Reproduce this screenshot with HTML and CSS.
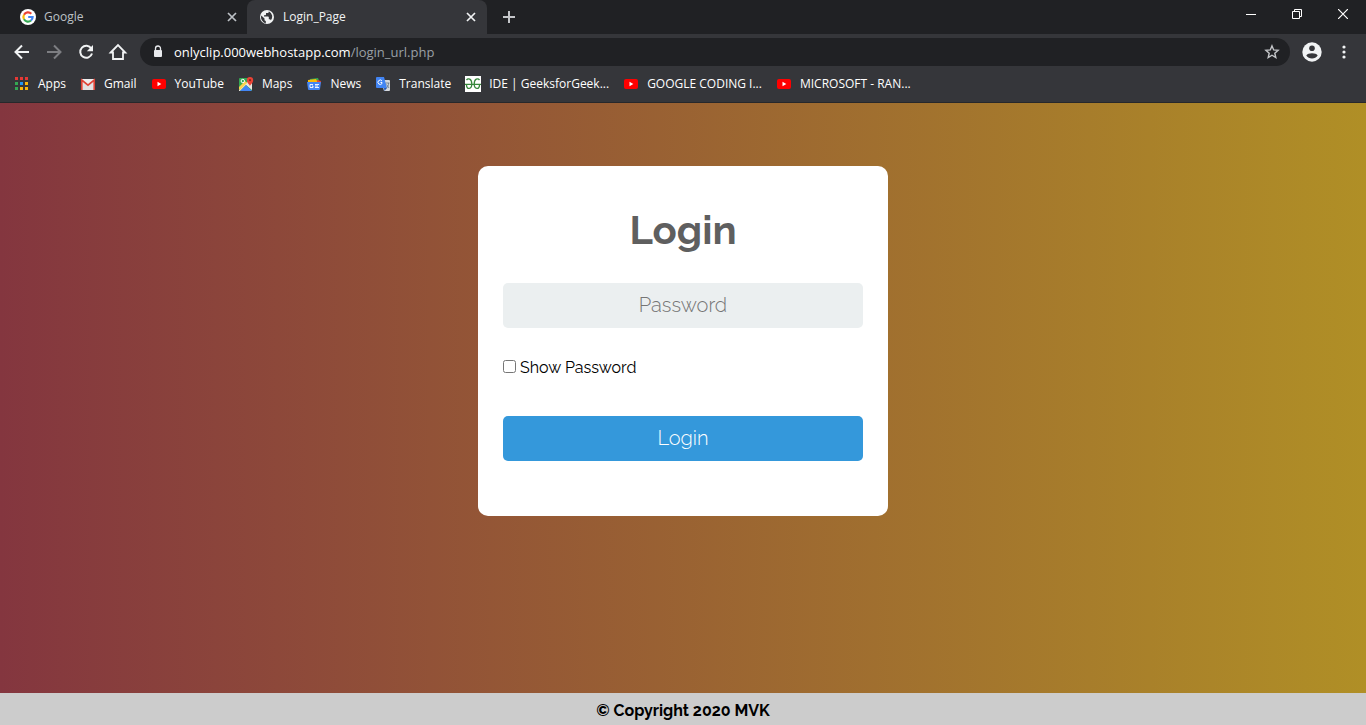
FILE: index.html
```
<!DOCTYPE html>
<html lang="en">
<head>
<meta charset="utf-8">
<title>Login_Page</title>
<link rel="stylesheet" href="styles.css">
</head>
<body>
<svg class="defs" aria-hidden="true">
  <symbol id="close" viewBox="0 0 16 16"><path d="M4 4l8 8M12 4l-8 8" stroke="currentColor" stroke-width="1.7" fill="none"/></symbol>
  <symbol id="youtube" viewBox="0 0 16 16"><rect x="1" y="3" width="14" height="10" rx="2" fill="#f00"/><path d="M6.500 5.800v4.400L10.300 8z" fill="#fff"/></symbol>
</svg>
<header class="browser">
  <div class="tabstrip">
    <div class="tab">
      <svg class="icon" viewBox="0 0 16 16"><circle cx="8" cy="8" r="8" fill="#fff"/><g fill="none" stroke-width="2.2"><path d="M11.3 4.7A4.6 4.6 0 0 0 4 5.8" stroke="#ea4335"/><path d="M4 5.8a4.6 4.6 0 0 0 0 4.5" stroke="#fbbc05"/><path d="M4 10.3a4.6 4.6 0 0 0 7 1.2" stroke="#34a853"/><path d="M11 11.5A4.5 4.5 0 0 0 12.6 8H8.2" stroke="#4285f4"/></g></svg>
      <span class="tab-title">Google</span>
      <button class="tab-close" aria-label="Close Google tab"><svg class="icon"><use href="#close"/></svg></button>
    </div>
    <div class="tab tab-active">
      <svg class="icon" viewBox="0 0 16 16"><circle cx="8" cy="8" r="7" fill="#f1f3f4"/><path d="M2.3 6.4l3.2 3.2v1.2c0 .7.5 1.2 1.3 1.2v2.4A6.3 6.3 0 0 1 2.3 6.4zM9.8 2.2v.5c0 .8-.6 1.4-1.4 1.4H7v1.4c0 .4-.3.7-.8.7H5v1.4h4c.5 0 .8.3.8.7v2h.7c.7 0 1.2.4 1.4 1a6 6 0 0 0-2.1-9.1z" fill="#35363a"/></svg>
      <span class="tab-title">Login_Page</span>
      <button class="tab-close" aria-label="Close Login_Page tab"><svg class="icon"><use href="#close"/></svg></button>
    </div>
    <button class="new-tab" aria-label="New tab"><svg class="icon" viewBox="0 0 16 16"><path d="M8 2v12M2 8h12" stroke="#c4c6c9" stroke-width="2"/></svg></button>
    <div class="window-buttons">
      <button aria-label="Minimize"><svg viewBox="0 0 10 10"><path d="M0 5.5h10" stroke="#fff"/></svg></button>
      <button aria-label="Restore"><svg viewBox="0 0 10 10"><path d="M.5 2.5h7v7h-7zM2.5 2.500V.5h7v7h-2" fill="none" stroke="#fff"/></svg></button>
      <button aria-label="Close window"><svg viewBox="0 0 10 10"><path d="M0 0l10 10M10 0L0 10" stroke="#fff" stroke-width="1.2"/></svg></button>
    </div>
  </div>
  <div class="toolbar">
    <button class="tool" aria-label="Back"><svg viewBox="0 0 20 20"><path d="M17 10H4M10 3.500L3.500 10l6.500 6.500" fill="none" stroke="#f1f3f4" stroke-width="2"/></svg></button>
    <button class="tool" aria-label="Forward"><svg viewBox="0 0 20 20"><path d="M3 10h13M10 3.500l6.500 6.500-6.500 6.500" fill="none" stroke="#7d7e82" stroke-width="2"/></svg></button>
    <button class="tool" aria-label="Reload"><svg viewBox="0 0 20 20"><path d="M15.300 6.500A6 6 0 1 0 16 11.500" fill="none" stroke="#f1f3f4" stroke-width="2"/><path d="M17 3v6.200h-6.200z" fill="#f1f3f4"/></svg></button>
    <button class="tool" aria-label="Home"><svg viewBox="0 0 20 20"><path d="M2.700 10.500L10 3l7.300 7.500H15V17H5v-6.500z" fill="none" stroke="#f1f3f4" stroke-width="1.8"/></svg></button>
    <div class="address">
      <svg class="icon" viewBox="0 0 16 16"><path d="M5.500 7V4.500a2.500 2.500 0 0 1 5 0V7" fill="none" stroke="#e8eaed" stroke-width="1.3"/><rect x="4" y="6" width="8" height="7" rx="1" fill="#e8eaed"/></svg>
      <span class="url">onlyclip.000webhostapp.com<span class="url-path">/login_url.php</span></span>
      <button class="star" aria-label="Bookmark this page"><svg class="icon" viewBox="0 0 16 16"><path d="M8 1.900l1.700 4 4.400.4-3.300 2.900 1 4.300L8 11.200l-3.800 2.300 1-4.300-3.300-2.900 4.400-.4z" fill="none" stroke="#c4c6c9" stroke-width="1.4"/></svg></button>
    </div>
    <button class="tool" aria-label="Profile"><svg viewBox="0 0 20 20"><circle cx="10" cy="10" r="9.700" fill="#f1f3f4"/><circle cx="10" cy="6.300" r="2.800" fill="#35363a"/><path d="M4.300 13.500c1.400-3 10-3 11.400 0-2.300 4-9.100 4-11.400 0z" fill="#35363a"/></svg></button>
    <button class="tool" aria-label="Menu"><svg viewBox="0 0 20 20" fill="#f1f3f4"><circle cx="10" cy="5" r="1.600"/><circle cx="10" cy="10" r="1.600"/><circle cx="10" cy="15" r="1.600"/></svg></button>
  </div>
  <nav class="bookmarks">
    <a href="#"><svg class="icon" viewBox="0 0 16 16"><g fill="#e53935"><path d="M1 1h3v3H1zM6 1h3v3H6zM11 1h3v3h-3z"/></g><path d="M1 6h3v3H1zM1 11h3v3H1z" fill="#34a853"/><path d="M6 6h3v3H6z" fill="#2196f3"/><path d="M11 6h3v3h-3zM6 11h3v3H6zM11 11h3v3h-3z" fill="#fbb60a"/></svg><span>Apps</span></a>
    <a href="#"><svg class="icon" viewBox="0 0 16 16"><rect x="1" y="3" width="14" height="11" rx="1" fill="#eee"/><path d="M3 14V6l5 4 5-4v8z" fill="#e2e2e2"/><path d="M1.800 14V4L8 9.200 14.200 4v10" fill="none" stroke="#df4437" stroke-width="1.700"/></svg><span>Gmail</span></a>
    <a href="#"><svg class="icon"><use href="#youtube"/></svg><span>YouTube</span></a>
    <a href="#"><svg class="icon" viewBox="0 0 16 16"><rect x="1" y="2" width="13" height="13" rx="1" fill="#34a853"/><path d="M1 14L12 3l2 2v9l-6-5-6 6H1z" fill="#e8e8df"/><path d="M2 15l6-6 6 6z" fill="#4285f4"/><path d="M1 11l6-6 2 2-7 7-1-1z" fill="#fbd34b"/><circle cx="4.800" cy="5" r="1.700" fill="none" stroke="#fff"/><path d="M12 10.500c0-2-3.200-3-3.200-6.200a3.200 3.200 0 0 1 6.400 0c0 3.200-3.200 4.200-3.200 6.200z" fill="#ea4335"/><circle cx="12" cy="4.200" r="1.100" fill="#8f211a"/></svg><span>Maps</span></a>
    <a href="#"><svg class="icon" viewBox="0 0 16 16"><path d="M4 3l8-1 2 5H4z" fill="#34a853"/><path d="M2 4l8-1 2 4H2z" fill="#fbbc05"/><path d="M11 4l4 1-1 4h-3z" fill="#ea4335"/><path d="M1 6h14l-1 7a1 1 0 0 1-1 1H3a1 1 0 0 1-1-1z" fill="#4285f4"/><path d="M7 8.500H4v3h3V10H6M9 8.500h4M9 10h3M9 11.500h4" fill="none" stroke="#fff" stroke-width=".9"/></svg><span>News</span></a>
    <a href="#"><svg class="icon" viewBox="0 0 16 16"><path d="M6 4h8a1 1 0 0 1 1 1v9a1 1 0 0 1-1 1H9z" fill="#d6d9dd"/><path d="M2 1h7l3 11H2a1 1 0 0 1-1-1V2a1 1 0 0 1 1-1z" fill="#4285f4"/><path d="M9 12h3l-2.500 3z" fill="#2759b5"/><path d="M7 5a2.200 2.200 0 1 0 0 2.500V6.500H5.500" fill="none" stroke="#fff"/><path d="M10.500 7h4M13.500 7c0 3-1 4-2 5M11.500 8.500l2.500 3.500" fill="none" stroke="#60758a" stroke-width=".8"/></svg><span>Translate</span></a>
    <a href="#"><svg class="icon" viewBox="0 0 16 16"><path d="M0 0h16v16H0z" fill="#fff"/><path d="M1.500 4c1.500-2 5.300-1.500 5.300 4s-5.300 6-5.300 1M14.500 4c-1.500-2-5.300-1.500-5.300 4s5.300 6 5.300 1M0 8.300h16" fill="none" stroke="#36873b" stroke-width="1.300"/></svg><span>IDE | GeeksforGeek...</span></a>
    <a href="#"><svg class="icon"><use href="#youtube"/></svg><span>GOOGLE CODING I...</span></a>
    <a href="#"><svg class="icon"><use href="#youtube"/></svg><span>MICROSOFT - RAN...</span></a>
  </nav>
</header>
<main class="page">
  <form class="card">
    <h1>Login</h1>
    <input class="field" type="password" placeholder="Password" aria-label="Password">
    <div class="show"><input type="checkbox" id="show"><label for="show">Show Password</label></div>
    <button class="submit" type="button">Login</button>
  </form>
</main>
<footer class="footer">© Copyright 2020 MVK</footer>
</body>
</html>
```
FILE: styles.css
```
* { box-sizing: border-box; }
body {
  margin: 0;
  min-height: 100vh;
  display: flex;
  flex-direction: column;
  font-family: Raleway, Lato, sans-serif;
  color: #000;
}
button { border: 0; padding: 0; background: none; color: inherit; font: inherit; }
.defs { display: none; }
.icon { width: 16px; height: 16px; flex: none; display: block; }

.browser {
  font: 12px/16px "Segoe UI", "Open Sans", sans-serif;
  color: #f1f3f4;
  background: #35363a;
  border-bottom: 1px solid #27282b;
}
.tabstrip { display: flex; height: 34px; background: #202124; }
.tab {
  display: flex;
  align-items: center;
  gap: 8px;
  width: 247px;
  padding: 0 7px 0 20px;
  color: #bdc1c6;
}
.tab-active {
  width: 240px;
  padding: 0 8px 0 12px;
  border-radius: 8px 8px 0 0;
  background: #35363a;
  color: #f1f3f4;
}
.tab-title { flex: 1; }
.new-tab { display: flex; align-items: center; padding: 0 14px; }
.window-buttons { display: flex; margin-left: auto; height: 28px; }
.window-buttons button { width: 46px; display: flex; align-items: center; justify-content: center; }
.window-buttons svg { width: 10px; height: 10px; }

.toolbar { display: flex; align-items: center; height: 36px; gap: 12px; padding: 0 12px; }
.tool svg { display: block; width: 20px; height: 20px; }
.address {
  flex: 1;
  display: flex;
  align-items: center;
  gap: 8px;
  height: 28px;
  padding: 0 10px;
  border-radius: 14px;
  background: #202124;
  font-size: 13px;
}
.url { flex: 1; color: #fff; }
.url-path { color: #9aa0a6; }

.bookmarks { display: flex; align-items: center; gap: 14px; height: 32px; padding: 0 14px 4px; }
.bookmarks a { display: flex; align-items: center; gap: 8px; color: #fff; text-decoration: none; white-space: nowrap; }

.page {
  flex: 1;
  padding: 63px 16px;
  background: linear-gradient(to right, #84363f, #b08f26);
}
.card {
  max-width: 410px;
  margin: 0 auto;
  padding: 40px 25px 55px;
  border-radius: 10px;
  background: #fff;
}
h1 { margin: 0 0 29px; font-size: 40px; line-height: 48px; text-align: center; color: #5f5f5f; }
.field, .submit {
  display: block;
  width: 100%;
  height: 45px;
  padding: 0 0 2px;
  border: 0;
  border-radius: 5px;
  font-family: inherit;
  font-size: 20px;
  font-weight: 300;
  text-align: center;
}
.field { background: #ebeff0; }
.field::placeholder { color: #757575; }
.show { display: flex; align-items: center; gap: 4px; margin: 28px 0 36px; font-size: 16px; line-height: 24px; }
.show input { width: 13px; height: 13px; margin: 0 0 4px; }
.submit { background: #3498db; color: #fff; }

.footer { padding-top: 4px; background: #ccc; font-size: 16px; font-weight: 700; line-height: 28px; text-align: center; }
```
